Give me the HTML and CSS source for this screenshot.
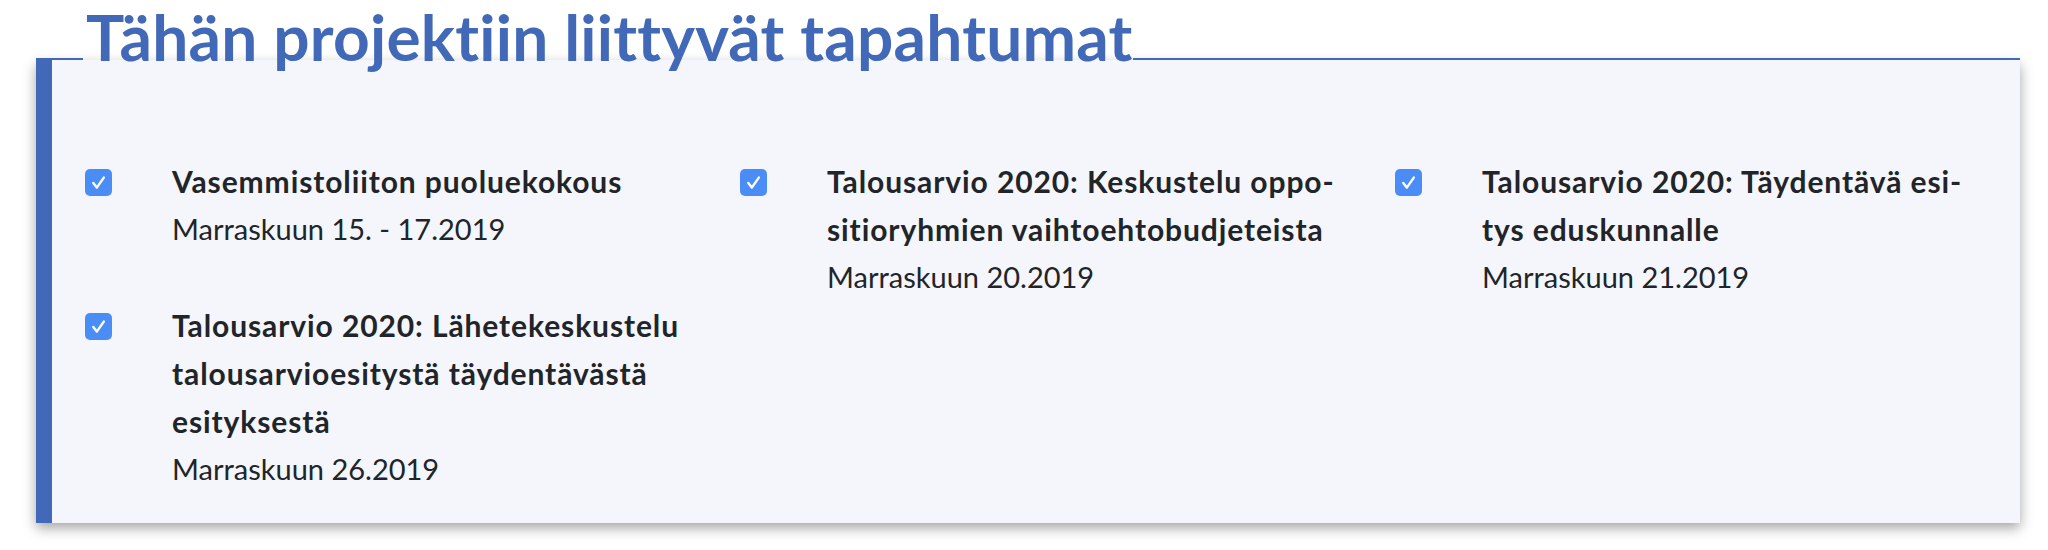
FILE: index.html
```html
<!DOCTYPE html>
<html lang="fi">
<head>
<meta charset="utf-8">
<title>Tapahtumat</title>
<link rel="stylesheet" href="styles.css">
</head>
<body>
<main class="page">
  <section class="events">
    <header class="events-head">
      <h2 class="events-title">Tähän projektiin liittyvät tapahtumat</h2>
    </header>
    <div class="events-body">
      <ul class="event-list">
        <li class="event">
          <span class="check"><svg viewBox="0 0 27 27" width="27" height="27"><path d="M8.3 14 L11.8 18.6 L18.8 8.6" fill="none" stroke="#fff" stroke-width="2.4" stroke-linecap="round" stroke-linejoin="round"/></svg></span>
          <div class="event-text">
            <div class="event-name">Vasemmistoliiton puoluekokous</div>
            <div class="event-date">Marraskuun 15. - 17.2019</div>
          </div>
        </li>
        <li class="event">
          <span class="check"><svg viewBox="0 0 27 27" width="27" height="27"><path d="M8.3 14 L11.8 18.6 L18.8 8.6" fill="none" stroke="#fff" stroke-width="2.4" stroke-linecap="round" stroke-linejoin="round"/></svg></span>
          <div class="event-text">
            <div class="event-name">Talousarvio 2020: Keskustelu oppo-<br>sitioryhmien vaihtoehtobudjeteista</div>
            <div class="event-date">Marraskuun 20.2019</div>
          </div>
        </li>
        <li class="event">
          <span class="check"><svg viewBox="0 0 27 27" width="27" height="27"><path d="M8.3 14 L11.8 18.6 L18.8 8.6" fill="none" stroke="#fff" stroke-width="2.4" stroke-linecap="round" stroke-linejoin="round"/></svg></span>
          <div class="event-text">
            <div class="event-name">Talousarvio 2020: Täydentävä esi-<br>tys eduskunnalle</div>
            <div class="event-date">Marraskuun 21.2019</div>
          </div>
        </li>
        <li class="event">
          <span class="check"><svg viewBox="0 0 27 27" width="27" height="27"><path d="M8.3 14 L11.8 18.6 L18.8 8.6" fill="none" stroke="#fff" stroke-width="2.4" stroke-linecap="round" stroke-linejoin="round"/></svg></span>
          <div class="event-text">
            <div class="event-name">Talousarvio 2020: Lähetekeskustelu talousarvioesitystä täydentävästä esityksestä</div>
            <div class="event-date">Marraskuun 26.2019</div>
          </div>
        </li>
      </ul>
    </div>
  </section>
</main>
</body>
</html>
```
FILE: styles.css
```css
html, body {
  margin: 0;
  padding: 0;
  background: #ffffff;
}

body {
  font-family: Lato, "Noto Sans", sans-serif;
  color: #212529;
}

.page {
  padding: 5px 28px 27px 36px;
}

.events-head {
  display: flex;
  align-items: flex-end;
}

.events-head::before,
.events-head::after {
  content: "";
  height: 2px;
  background: #4169b8;
}

.events-head::before {
  flex: 0 0 47px;
}

.events-head::after {
  flex: 1 1 auto;
}

.events-title {
  margin: 0 0 -9px 0;
  padding: 0 1px 0 3px;
  font-family: Lato, "Noto Sans", sans-serif;
  font-weight: 700;
  font-size: 64px;
  line-height: 64px;
  letter-spacing: 0.2px;
  color: #4169b8;
  white-space: nowrap;
}

.events-body {
  border-left: 16px solid #4169b8;
  background: #f5f6fb;
  box-shadow: 0 5px 12px rgba(0, 0, 0, 0.36);
  padding: 97px 25px 30px 33px;
}

.event-list {
  list-style: none;
  margin: 0;
  padding: 0;
  display: grid;
  grid-template-columns: repeat(3, 1fr);
  column-gap: 55px;
  row-gap: 0;
}

.event {
  display: flex;
  align-items: flex-start;
  gap: 60px;
}

.check {
  flex: 0 0 27px;
  width: 27px;
  height: 27px;
  margin-top: 12px;
  border-radius: 5px;
  background: #4b8df7;
  display: flex;
}

.event-text {
  flex: 1 1 auto;
  min-width: 0;
  line-height: 48px;
}

.event-name {
  font-weight: 700;
  font-size: 30px;
  letter-spacing: 0.9px;
}

.event-date {
  font-weight: 400;
  font-size: 29px;
}
```
